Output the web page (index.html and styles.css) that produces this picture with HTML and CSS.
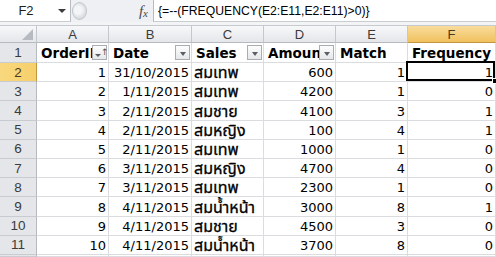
FILE: index.html
```html
<!DOCTYPE html>
<html lang="th">
<head>
    <meta charset="UTF-8">
    <title>Frequency</title>
    <link rel="stylesheet" href="styles.css">
</head>
<body>
    <div class="formula-bar">
        <div class="name-box">
            <span class="name">F2</span>
            <span class="name-arrow"></span>
        </div>
        <div class="bar-tools">
            <span class="grip"></span>
            <span class="fx"><i>f</i><sub>x</sub></span>
        </div>
        <div class="formula">{=--(FREQUENCY(E2:E11,E2:E11)&gt;0)}</div>
    </div>
    <div class="bar-gap"></div>

    <div class="sheet">
        <!-- column headers -->
        <div class="corner"><span class="corner-tri"></span></div>
        <div class="col-head">A</div>
        <div class="col-head">B</div>
        <div class="col-head">C</div>
        <div class="col-head">D</div>
        <div class="col-head">E</div>
        <div class="col-head selected">F</div>

        <!-- row 1 -->
        <div class="row-head">1</div>
        <div class="cell head">OrderID<span class="filter sorted"><span class="tri"></span><span class="up">↑</span></span></div>
        <div class="cell head">Date<span class="filter"><span class="tri"></span></span></div>
        <div class="cell head">Sales<span class="filter"><span class="tri"></span></span></div>
        <div class="cell head">Amount<span class="filter"><span class="tri"></span></span></div>
        <div class="cell head">Match</div>
        <div class="cell head">Frequency</div>

        <div class="row-head selected">2</div>
        <div class="cell num">1</div>
        <div class="cell num">31/10/2015</div>
        <div class="cell th">สมเทพ</div>
        <div class="cell num">600</div>
        <div class="cell num">1</div>
        <div class="cell num active">1<span class="handle"></span></div>

        <div class="row-head">3</div>
        <div class="cell num">2</div>
        <div class="cell num">1/11/2015</div>
        <div class="cell th">สมเทพ</div>
        <div class="cell num">4200</div>
        <div class="cell num">1</div>
        <div class="cell num">0</div>

        <div class="row-head">4</div>
        <div class="cell num">3</div>
        <div class="cell num">2/11/2015</div>
        <div class="cell th">สมชาย</div>
        <div class="cell num">4100</div>
        <div class="cell num">3</div>
        <div class="cell num">1</div>

        <div class="row-head">5</div>
        <div class="cell num">4</div>
        <div class="cell num">2/11/2015</div>
        <div class="cell th">สมหญิง</div>
        <div class="cell num">100</div>
        <div class="cell num">4</div>
        <div class="cell num">1</div>

        <div class="row-head">6</div>
        <div class="cell num">5</div>
        <div class="cell num">2/11/2015</div>
        <div class="cell th">สมเทพ</div>
        <div class="cell num">1000</div>
        <div class="cell num">1</div>
        <div class="cell num">0</div>

        <div class="row-head">7</div>
        <div class="cell num">6</div>
        <div class="cell num">3/11/2015</div>
        <div class="cell th">สมหญิง</div>
        <div class="cell num">4700</div>
        <div class="cell num">4</div>
        <div class="cell num">0</div>

        <div class="row-head">8</div>
        <div class="cell num">7</div>
        <div class="cell num">3/11/2015</div>
        <div class="cell th">สมเทพ</div>
        <div class="cell num">2300</div>
        <div class="cell num">1</div>
        <div class="cell num">0</div>

        <div class="row-head">9</div>
        <div class="cell num">8</div>
        <div class="cell num">4/11/2015</div>
        <div class="cell th">สมน้ำหน้า</div>
        <div class="cell num">3000</div>
        <div class="cell num">8</div>
        <div class="cell num">1</div>

        <div class="row-head">10</div>
        <div class="cell num">9</div>
        <div class="cell num">4/11/2015</div>
        <div class="cell th">สมชาย</div>
        <div class="cell num">4500</div>
        <div class="cell num">3</div>
        <div class="cell num">0</div>

        <div class="row-head">11</div>
        <div class="cell num">10</div>
        <div class="cell num">4/11/2015</div>
        <div class="cell th">สมน้ำหน้า</div>
        <div class="cell num">3700</div>
        <div class="cell num">8</div>
        <div class="cell num">0</div>

        <div class="row-head"></div>
        <div class="cell"></div>
        <div class="cell"></div>
        <div class="cell"></div>
        <div class="cell"></div>
        <div class="cell"></div>
        <div class="cell"></div>
    </div>
</body>
</html>
```

FILE: styles.css
```css
* {
    margin: 0;
    padding: 0;
    box-sizing: border-box;
}

body {
    width: 496px;
    height: 257px;
    overflow: hidden;
    background: #ffffff;
    font-family: "DejaVu Sans", "Noto Sans Thai", "Noto Sans", sans-serif;
}

/* formula bar */
.formula-bar {
    display: flex;
    height: 22px;
    background: #eef0f3;
}

.name-box {
    width: 71px;
    display: flex;
    align-items: center;
    background: #ffffff;
    border-right: 1px solid #b8bcc2;
    border-bottom: 1px solid #c9cdd2;
    font-family: "Liberation Sans", Arial, sans-serif;
    font-size: 13px;
    color: #1e1e1e;
}

.name {
    width: 52px;
    text-align: center;
}

.name-arrow {
    width: 0;
    height: 0;
    margin-left: 6px;
    border-left: 4px solid transparent;
    border-right: 4px solid transparent;
    border-top: 4px solid #3c3c3c;
}

.bar-tools {
    width: 82px;
    display: flex;
    align-items: center;
    justify-content: space-between;
    padding: 0 5px 0 1px;
}

.grip {
    width: 15px;
    height: 18px;
    border-radius: 50%;
    background: radial-gradient(circle at 40% 45%, #f4f5f7 30%, #d5d8dc 75%, #b9bdc3);
    border: 1px solid #c2c6cb;
}

.fx {
    font-family: "Liberation Serif", "Times New Roman", serif;
    font-size: 15px;
    color: #4a4a4a;
    line-height: 1;
}

.fx sub {
    font-size: 11px;
    font-style: italic;
    vertical-align: -1px;
}

.formula {
    flex: 1;
    display: flex;
    align-items: center;
    padding-left: 4px;
    background: #ffffff;
    border-left: 1px solid #b8bcc2;
    border-bottom: 1px solid #c9cdd2;
    font-family: "Liberation Sans", Arial, sans-serif;
    font-size: 12.2px;
    color: #000000;
    white-space: nowrap;
}

.bar-gap {
    height: 4px;
    background: #f3f4f6;
    border-bottom: 1px solid #c6cacf;
}

/* grid */
.sheet {
    display: grid;
    grid-template-columns: 37px 72px 83px 72px 72px 72px 88px;
    grid-template-rows: 17px 20px repeat(10, 19.2px) 2px;
}

.corner,
.col-head {
    background: linear-gradient(#f7f8f9, #e4e6ea);
    border-right: 1px solid #c4c8cd;
    border-bottom: 1px solid #b6bac0;
}

.corner {
    position: relative;
}

.corner-tri {
    position: absolute;
    right: 3px;
    bottom: 2px;
    width: 0;
    height: 0;
    border-left: 11px solid transparent;
    border-bottom: 11px solid #b7bbc1;
}

.col-head {
    display: flex;
    align-items: center;
    justify-content: center;
    font-family: "Liberation Sans", Arial, sans-serif;
    font-size: 13px;
    color: #3b3b3b;
}

.col-head.selected {
    background: linear-gradient(#f9dc9d, #f1c15e);
    border-bottom-color: #c2953f;
    color: #4a3a1a;
}

.row-head {
    display: flex;
    align-items: center;
    justify-content: center;
    overflow: hidden;
    background: #e4e6ea;
    border-right: 1px solid #b6bac0;
    border-bottom: 1px solid #c8ccd1;
    font-family: "Liberation Sans", Arial, sans-serif;
    font-size: 13.5px;
    color: #3b3b3b;
}

.row-head.selected {
    background: linear-gradient(90deg, #f9d87e, #f5cf6a);
    border-right-color: #c2953f;
    color: #4a3a1a;
}

.cell {
    position: relative;
    display: flex;
    align-items: flex-end;
    padding: 0 2px 1px 2px;
    border-right: 1px solid #dadcdf;
    border-bottom: 1px solid #dadcdf;
    font-size: 13px;
    line-height: 15px;
    color: #000000;
    white-space: nowrap;
    overflow: hidden;
}

.cell.num {
    justify-content: flex-end;
}

.cell.th {
    font-size: 16px;
    line-height: 17px;
    padding-bottom: 0;
    -webkit-text-stroke: 0.3px #000000;
}

.cell.head {
    font-weight: bold;
    font-size: 13.5px;
    padding-left: 4px;
}

/* filter buttons */
.filter {
    position: absolute;
    right: 1px;
    bottom: 2px;
    width: 15px;
    height: 15px;
    display: flex;
    align-items: center;
    justify-content: center;
    background: linear-gradient(#fdfdfd, #e5e7ea);
    border: 1px solid #a9adb3;
}

.tri {
    width: 0;
    height: 0;
    margin-top: 2px;
    border-left: 3.5px solid transparent;
    border-right: 3.5px solid transparent;
    border-top: 4px solid #5a5e64;
}

.filter.sorted {
    justify-content: flex-start;
    padding-left: 2px;
}

.filter.sorted .tri {
    margin-top: 5px;
    border-left-width: 3px;
    border-right-width: 3px;
    border-top-width: 3px;
}

.up {
    font-family: "DejaVu Sans", sans-serif;
    font-weight: normal;
    font-size: 9px;
    line-height: 1;
    color: #4a4e54;
}

/* active cell */
.cell.active {
    overflow: visible;
}

.cell.active::after {
    content: "";
    position: absolute;
    left: -2px;
    top: -2px;
    right: 0;
    bottom: 0;
    border: 2px solid #000000;
}

.handle {
    position: absolute;
    right: -3px;
    bottom: -3px;
    width: 6px;
    height: 6px;
    background: #000000;
    border: 1px solid #ffffff;
    z-index: 1;
}
```
